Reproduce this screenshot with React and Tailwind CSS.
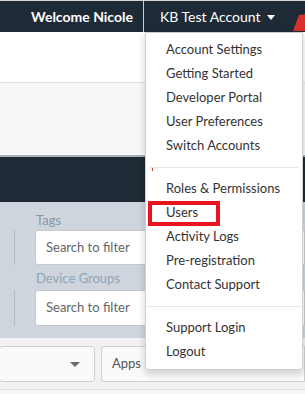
import React from "react";

const items1 = ["Account Settings", "Getting Started", "Developer Portal", "User Preferences", "Switch Accounts"];
const items2 = ["Roles & Permissions", "Users", "Activity Logs", "Pre-registration", "Contact Support"];
const items3 = ["Support Login", "Logout"];

function Item({ label }) {
  const isUsers = label === "Users";
  return (
    <div className="relative h-[24px] flex items-center pl-[20px] text-[13px] text-[#333]">
      {isUsers && (
        <div className="absolute left-[2px] top-[0px] w-[72px] h-[25px] border-4 border-[#e8141e]" />
      )}
      <span className="relative">{label}</span>
    </div>
  );
}

export default function App() {
  return (
    <div
      className="relative w-[305px] h-[394px] overflow-hidden bg-[#f7f7f7]"
      style={{ fontFamily: "Lato, 'Liberation Sans', sans-serif" }}
    >
      {/* header */}
      <div className="h-[32px] border-t border-[#d6d6d6] bg-[#1e2a35] flex justify-end items-stretch overflow-hidden">
        <div className="flex items-center pr-[10px] text-[14px] font-bold text-white">Welcome Nicole</div>
        <div className="w-px bg-[#c9ced3]" />
        <div className="w-[149px] flex items-center pl-[16px] text-[14px] text-white">
          KB Test Account
          <svg width="8" height="5" viewBox="0 0 8 5" className="ml-[6px] mt-[1px]">
            <path d="M0 0 H8 L4 5 Z" fill="#fff" />
          </svg>
        </div>
        <div className="w-[12px] shrink-0 relative">
          <svg width="14" height="31" viewBox="0 0 14 31" className="absolute left-0 top-0">
            <path d="M0 30 L6 14 L14 13 L14 30 Z" fill="#d8312d" />
          </svg>
        </div>
      </div>

      {/* white strip */}
      <div className="h-[51px] bg-white border-b border-[#e0e0e0]" />
      {/* light panel */}
      <div className="h-[74px] bg-[#f8f8f8] border-b-2 border-[#a9b2bb]" />
      {/* dark bar */}
      <div className="h-[45px] bg-[#1e2a35]" />

      {/* filter section */}
      <div className="h-[136px] bg-[#ced5dc] pt-[8px] flex flex-col">
        <div className="pl-[36px] text-[13px] text-[#8797a7] h-[20px] leading-[20px]">Tags</div>
        <div className="flex items-stretch h-[35px]">
          <div className="w-[15px] border-r border-[#b3bcc5]" />
          <div className="w-[20px]" />
          <div className="flex-1 bg-white border border-[#c8c8c8] rounded-l-[3px] flex items-center pl-[10px] text-[13px] text-[#666]">
            Search to filter
          </div>
        </div>
        <div className="pl-[36px] text-[13px] text-[#8fa4b8] h-[25px] leading-[27px]">Device Groups</div>
        <div className="flex items-stretch h-[36px]">
          <div className="w-[15px] border-r border-[#b3bcc5]" />
          <div className="w-[20px]" />
          <div className="flex-1 bg-white border border-[#c8c8c8] rounded-l-[3px] flex items-center pl-[10px] text-[13px] text-[#666]">
            Search to filter
          </div>
        </div>
      </div>

      {/* bottom controls */}
      <div className="h-[52px] bg-[#f2f2f2] pt-[8px] border-b border-[#dcdcdc]">
        <div className="flex h-[36px] gap-[6px]">
          <div className="w-[96px] -ml-[1px] bg-[#fafafa] border border-[#cfcfcf] rounded-[3px] flex items-center justify-end pr-[14px]">
            <svg width="10" height="5" viewBox="0 0 10 5">
              <path d="M0 0 H10 L5 5 Z" fill="#6b6b6b" />
            </svg>
          </div>
          <div className="flex-1 bg-[#fafafa] border border-[#cfcfcf] rounded-l-[3px] flex items-center pl-[10px] text-[13px] text-[#555]">
            Apps
          </div>
        </div>
      </div>

      {/* dropdown */}
      <div className="absolute left-[145px] top-[32px] w-[158px] bg-white border border-[#cfcfcf] rounded-b-[4px] shadow-[0_4px_8px_rgba(0,0,0,0.18)] py-[5px]">
        {items1.map((l) => (
          <Item key={l} label={l} />
        ))}
        <div className="relative h-px bg-[#e5e5e5] my-[9px] mx-[4px]">
          <div className="absolute left-[2px] top-[1px] w-px h-[3px] bg-[#d63a3a]" />
        </div>
        {items2.map((l) => (
          <Item key={l} label={l} />
        ))}
        <div className="h-px bg-[#e5e5e5] my-[9px]" />
        {items3.map((l) => (
          <Item key={l} label={l} />
        ))}
      </div>
    </div>
  );
}
